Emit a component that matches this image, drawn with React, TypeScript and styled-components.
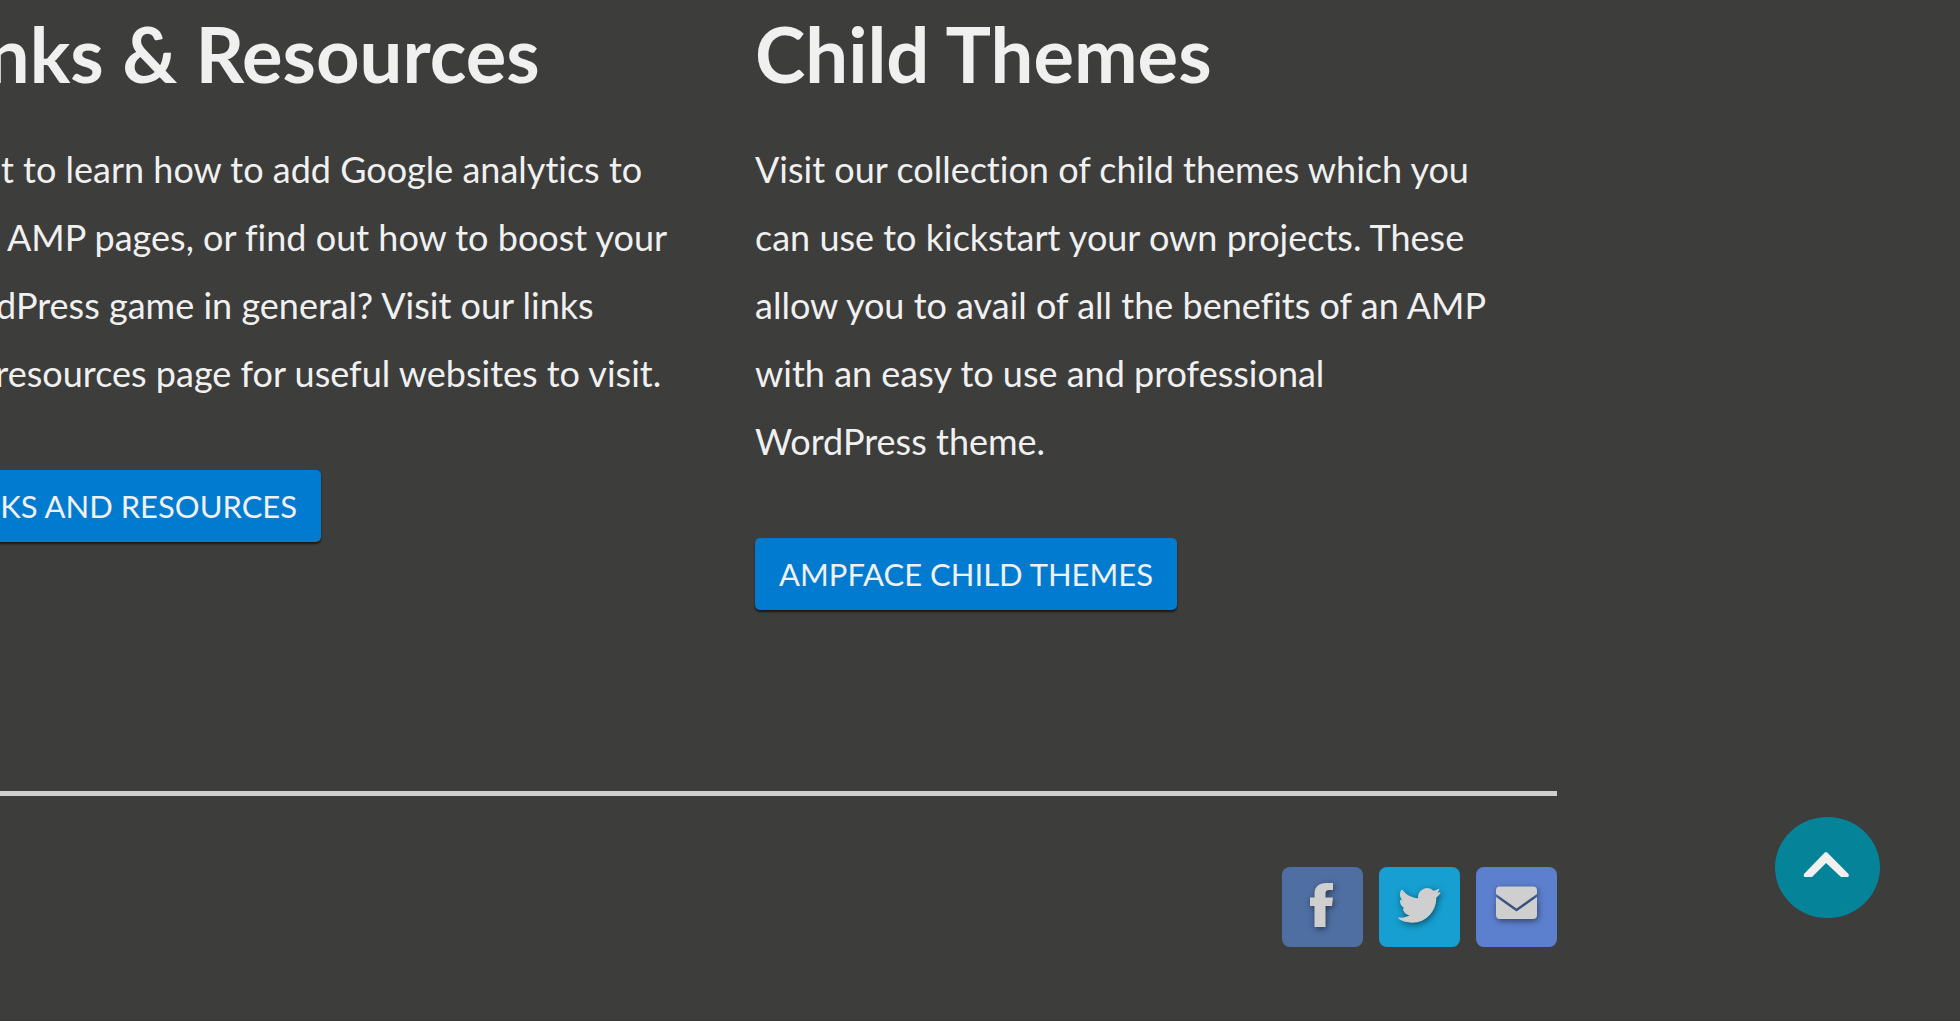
import React from "react";
import styled, { createGlobalStyle } from "styled-components";

const GlobalStyle = createGlobalStyle`
  *, *::before, *::after { box-sizing: border-box; }
  html, body { margin: 0; min-height: 100%; background: #3d3d3b; overflow-x: hidden; }
  body {
    color: #f0f0f0;
    font-family: Lato, "Open Sans", sans-serif;
    font-variant-ligatures: no-common-ligatures;
  }
`;

const Footer = styled.footer`
  min-height: 100vh;
  overflow: hidden;
  border-bottom: 1px solid #383836;
`;

const Container = styled.div`
  margin: 0 403px 0 -72px;
`;

const Columns = styled.div`
  display: grid;
  grid-template-columns: repeat(2, 1fr);
  gap: 25px;
  padding-bottom: 181px;
  border-bottom: 5px solid #cfcfcf;
`;

const Column = styled.section`
  display: flex;
  flex-direction: column;
  align-items: flex-start;
  white-space: nowrap;
`;

const Title = styled.h2`
  margin: 0 0 27px;
  font-size: 76px;
  line-height: 108px;
  font-weight: 700;
`;

const Copy = styled.p`
  margin: 0 0 63px;
  font-size: 36px;
  line-height: 68px;
`;

const ButtonLink = styled.a`
  padding: 0 24px;
  border-radius: 5px;
  background: #007bd0;
  color: inherit;
  font-size: 31px;
  line-height: 72px;
  text-decoration: none;
  text-transform: uppercase;
  box-shadow: 0 2px 2px rgba(0, 0, 0, 0.6);
`;

const Social = styled.nav`
  display: flex;
  justify-content: flex-end;
  gap: 16px;
  padding-top: 71px;
`;

const SocialLink = styled.a<{ $color: string }>`
  display: flex;
  width: 81px;
  height: 80px;
  border-radius: 8px;
  background: ${(p) => p.$color};
  color: #cfcfcf;

  svg {
    width: 100%;
    height: 100%;
    filter: drop-shadow(1px 2px 3px rgba(0, 0, 0, 0.5));
  }
`;

const ToTop = styled.button`
  position: fixed;
  right: 80px;
  bottom: 103px;
  width: 105px;
  height: 101px;
  padding: 0;
  border: 0;
  border-radius: 50%;
  background: #048399;
  cursor: pointer;

  svg { display: block; width: 100%; height: 100%; }
`;

const columns = [
  {
    title: "Links & Resources",
    lines: [
      "Want to learn how to add Google analytics to",
      "your AMP pages, or find out how to boost your",
      "WordPress game in general? Visit our links",
      "and resources page for useful websites to visit.",
    ],
    action: "Links and Resources",
  },
  {
    title: "Child Themes",
    lines: [
      "Visit our collection of child themes which you",
      "can use to kickstart your own projects. These",
      "allow you to avail of all the benefits of an AMP",
      "with an easy to use and professional",
      "WordPress theme.",
    ],
    action: "AMPFace Child Themes",
  },
];

export default function App() {
  return (
    <>
      <GlobalStyle />
      <Footer>
        <Container>
          <Columns>
            {columns.map((c) => (
              <Column key={c.title}>
                <Title>{c.title}</Title>
                <Copy>
                  {c.lines.map((line) => (
                    <React.Fragment key={line}>{line}<br /></React.Fragment>
                  ))}
                </Copy>
                <ButtonLink href="#">{c.action}</ButtonLink>
              </Column>
            ))}
          </Columns>
          <Social aria-label="Social links">
            <SocialLink href="#" aria-label="Facebook" $color="#4f6fa2">
              <svg viewBox="0 0 81 80" fill="currentColor">
                <path d="M51 16v7h-4c-2.500 0-3.500 1.500-3.500 3.500v4H51l-1 8.500h-6.500V60h-11V39H28v-8.500h4.500v-4C32.500 20 37 16 44 16z" />
              </svg>
            </SocialLink>
            <SocialLink href="#" aria-label="Twitter" $color="#169fd0">
              <svg viewBox="0 0 81 80">
                <path
                  transform="translate(20 18) scale(1.700)"
                  fill="currentColor"
                  stroke="currentColor"
                  strokeWidth="0.8"
                  strokeLinejoin="round"
                  d="M23.950 4.570a10 10 0 0 1-2.820.780 4.960 4.960 0 0 0 2.160-2.720c-.950.550-2 .950-3.130 1.180a4.920 4.920 0 0 0-8.380 4.480C7.690 8.090 4.070 6.130 1.640 3.160a4.920 4.920 0 0 0 1.520 6.570 4.900 4.900 0 0 1-2.230-.610v.060c0 2.380 1.690 4.370 3.950 4.830a5 5 0 0 1-2.210.080 4.940 4.940 0 0 0 4.600 3.420A9.870 9.870 0 0 1 0 19.540a13.990 13.990 0 0 0 7.550 2.210c9.050 0 14-7.500 14-13.980 0-.210 0-.420-.020-.630a9.940 9.940 0 0 0 2.460-2.550z"
                />
              </svg>
            </SocialLink>
            <SocialLink href="#" aria-label="Email" $color="#5d80ce">
              <svg viewBox="0 0 81 80" fill="currentColor">
                <path d="M24 19.500h33a4 4 0 0 1 4 4v3.500L40.500 41.500 20 27v-3.500a4 4 0 0 1 4-4z" />
                <path d="M20 30 40.500 44.500 61 30V48a4 4 0 0 1-4 4H24a4 4 0 0 1-4-4z" />
              </svg>
            </SocialLink>
          </Social>
        </Container>
      </Footer>
      <ToTop type="button" aria-label="Back to top">
        <svg viewBox="0 0 105 101">
          <path
            d="M49.500 35.800q1.500-1.500 3 0L73.500 57q1 3-1 3H66L51 46 37 60H30q-2-.500-1-3z"
            fill="#f0f0f0"
          />
        </svg>
      </ToTop>
    </>
  );
}
